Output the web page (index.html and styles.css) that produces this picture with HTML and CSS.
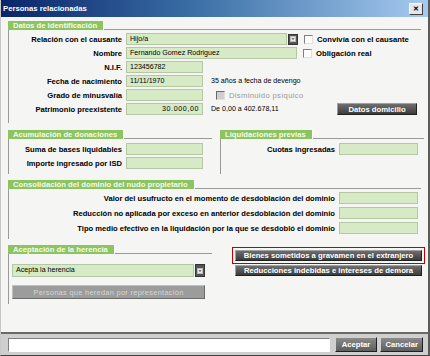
FILE: index.html
```html
<!DOCTYPE html>
<html lang="es">
<head>
    <meta charset="UTF-8">
    <title>Personas relacionadas</title>
    <link rel="stylesheet" href="styles.css">
</head>
<body>
<div class="window">
    <!-- Barra de título -->
    <div class="titlebar">
        <span class="title">Personas relacionadas</span>
        <span class="close">&#x2715;</span>
    </div>

    <div class="content">
        <!-- Datos de identificación -->
        <div class="group">
            <div class="group-head"><span class="group-tab">Datos de identificación</span></div>
            <div class="group-body ident">
                <div class="row">
                    <label class="lbl">Relación con el causante</label>
                    <span class="field w160">Hijo/a</span>
                    <span class="combo-btn"><svg width="6" height="6" viewBox="0 0 6 6"><rect x="0.5" y="0.5" width="5" height="5" fill="#e8e8e8" stroke="#bbb"/><path d="M1.5 2.2 L4.5 2.2 L3 4 Z" fill="#555"/></svg></span>
                    <span class="check"></span>
                    <span class="check-lbl">Convivía con el causante</span>
                </div>
                <div class="row">
                    <label class="lbl">Nombre</label>
                    <span class="field w171">Fernando Gomez Rodriguez</span>
                    <span class="check"></span>
                    <span class="check-lbl">Obligación real</span>
                </div>
                <div class="row">
                    <label class="lbl">N.I.F.</label>
                    <span class="field w77">123456782</span>
                </div>
                <div class="row">
                    <label class="lbl">Fecha de nacimiento</label>
                    <span class="field w77">11/11/1970</span>
                    <span class="note">35 años a fecha de devengo</span>
                </div>
                <div class="row gap-top">
                    <label class="lbl">Grado de minusvalía</label>
                    <span class="field w77"></span>
                    <span class="check disabled"></span>
                    <span class="check-lbl disabled">Disminuido psíquico</span>
                </div>
                <div class="row">
                    <label class="lbl">Patrimonio preexistente</label>
                    <span class="field w77 num">30.000,00</span>
                    <span class="note">De 0,00 a 402.678,11</span>
                    <span class="btn dark domicilio">Datos domicilio</span>
                </div>
            </div>
        </div>

        <div class="cols">
            <!-- Acumulación de donaciones -->
            <div class="group half">
                <div class="group-head"><span class="group-tab">Acumulación de donaciones</span></div>
                <div class="group-body small">
                    <div class="row">
                        <label class="lbl">Suma de bases liquidables</label>
                        <span class="field w77"></span>
                    </div>
                    <div class="row">
                        <label class="lbl">Importe ingresado por ISD</label>
                        <span class="field w77"></span>
                    </div>
                </div>
            </div>
            <!-- Liquidaciones previas -->
            <div class="group half">
                <div class="group-head"><span class="group-tab">Liquidaciones previas</span></div>
                <div class="group-body small">
                    <div class="row">
                        <label class="lbl lbl-wide">Cuotas ingresadas</label>
                        <span class="field w79"></span>
                    </div>
                </div>
            </div>
        </div>

        <!-- Consolidación del dominio -->
        <div class="group consol">
            <div class="group-head"><span class="group-tab">Consolidación del dominio del nudo propietario</span></div>
            <div class="group-body">
                <div class="row r15">
                    <label class="lbl lbl-long">Valor del usufructo en el momento de desdoblación del dominio</label>
                    <span class="field w79"></span>
                </div>
                <div class="row r15">
                    <label class="lbl lbl-long">Reducción no aplicada por exceso en anterior desdoblación del dominio</label>
                    <span class="field w79"></span>
                </div>
                <div class="row r15">
                    <label class="lbl lbl-long">Tipo medio efectivo en la liquidación por la que se desdobló el dominio</label>
                    <span class="field w79"></span>
                </div>
            </div>
        </div>

        <div class="cols bottom">
            <!-- Aceptación de la herencia -->
            <div class="group half">
                <div class="group-head"><span class="group-tab">Aceptación de la herencia</span></div>
                <div class="group-body herencia">
                    <div class="combo">
                        <span class="field combo-field">Acepta la herencia</span>
                        <span class="combo-btn"><svg width="6" height="6" viewBox="0 0 6 6"><rect x="0.5" y="0.5" width="5" height="5" fill="#e8e8e8" stroke="#bbb"/><path d="M1.5 2.2 L4.5 2.2 L3 4 Z" fill="#555"/></svg></span>
                    </div>
                    <span class="btn grey">Personas que heredan por representación</span>
                </div>
            </div>
            <div class="actions">
                <div class="marked"><span class="btn dark wide">Bienes sometidos a gravamen en el extranjero</span></div>
                <span class="btn dark wide">Reducciones indebidas e intereses de demora</span>
            </div>
        </div>
    </div>

    <!-- Pie -->
    <div class="footer">
        <span class="status"></span>
        <span class="btn mid">Aceptar</span>
        <span class="btn mid">Cancelar</span>
    </div>
</div>
</body>
</html>
```

FILE: styles.css
```css
* {
    margin: 0;
    padding: 0;
    box-sizing: border-box;
}

body {
    font-family: "Liberation Sans", Arial, sans-serif;
    background: #ffffff;
}

.window {
    width: 430px;
    height: 356px;
    display: flex;
    flex-direction: column;
    background: #f5f5f3;
    border-left: 1px solid #c8c8c8;
    border-right: 2px solid #5a5a5a;
    border-bottom: 1px solid #404040;
}

/* Barra de título */
.titlebar {
    height: 17px;
    display: flex;
    align-items: center;
    justify-content: space-between;
    padding: 0 5px 0 2px;
    background: linear-gradient(to right, #0a246a 0%, #3a6ea5 45%, #a6caf0 100%);
}

.title {
    color: #ffffff;
    font-weight: bold;
    font-size: 7.7px;
}

.close {
    width: 14px;
    height: 12px;
    display: flex;
    align-items: center;
    justify-content: center;
    background: #e6e6e6;
    border: 1px solid;
    border-color: #ffffff #404040 #404040 #ffffff;
    font-size: 7px;
    font-weight: bold;
    color: #000000;
}

.content {
    flex: 1;
    padding: 4px 7px 0 7px;
}

/* Grupos */
.group-head {
    display: flex;
    align-items: flex-end;
    height: 9px;
}

.group-head::after {
    content: "";
    flex: 1;
    border-bottom: 1px solid #9a9a9a;
}

.group-tab {
    height: 9px;
    line-height: 9px;
    padding: 0 6px 0 5px;
    background: #8dc462;
    color: #f4fbe8;
    font-weight: bold;
    font-size: 7.7px;
    border-right: 1px solid #ffffff;
}

.group-body {
    border-left: 1px solid #9a9a9a;
    padding: 3px 0 3px 0;
}

.ident {
    padding-bottom: 6px;
}

.row {
    display: flex;
    align-items: center;
    height: 12px;
    margin-bottom: 2px;
}

.row.gap-top {
    margin-top: 1px;
}

.row.r15 {
    margin-bottom: 3px;
}

.lbl {
    width: 113px;
    margin-right: 4px;
    text-align: right;
    font-weight: bold;
    font-size: 7.6px;
    color: #000000;
    white-space: nowrap;
}

.lbl-wide {
    width: 114px;
}

.lbl-long {
    width: 326px;
}

.field {
    height: 12px;
    line-height: 10px;
    padding: 0 3px;
    background: #d6eac6;
    border: 1px solid #b4c8a6;
    font-size: 7.1px;
    color: #000000;
    white-space: nowrap;
    overflow: hidden;
}

.field.num {
    text-align: right;
    letter-spacing: 0.6px;
}

.w160 { width: 161px; }
.w171 { width: 171px; }
.w77 { width: 77px; }
.w79 { width: 79px; }

.combo-btn {
    width: 10px;
    height: 11px;
    margin-left: 1px;
    display: flex;
    align-items: center;
    justify-content: center;
    background: #555555;
    border: 1px solid #333333;
}

.check {
    width: 9px;
    height: 9px;
    margin-left: 6px;
    background: #ffffff;
    border: 1px solid;
    border-color: #808080 #e0e0e0 #e0e0e0 #808080;
}

.check.disabled {
    margin-left: 13px;
    background: #cfcfcf;
    border-color: #6a6a6a #e0e0e0 #e0e0e0 #6a6a6a;
}

.check-lbl {
    margin-left: 4px;
    font-weight: bold;
    font-size: 7.7px;
    color: #000000;
}

.check-lbl.disabled {
    font-weight: normal;
    color: #9a9a9a;
    letter-spacing: 0.3px;
}

.note {
    margin-left: 8px;
    font-size: 7.1px;
    color: #000000;
}

/* Botones */
.btn {
    display: flex;
    align-items: center;
    justify-content: center;
    font-size: 7.7px;
    font-weight: bold;
    white-space: nowrap;
}

.btn.dark {
    color: #ffffff;
    background: linear-gradient(#6e6e6e, #3c3c3c);
    border: 1px solid;
    border-color: #a0a0a0 #202020 #202020 #a0a0a0;
}

.domicilio {
    width: 80px;
    height: 12px;
    margin-left: auto;
    margin-right: 4px;
}

.cols {
    display: flex;
    gap: 8px;
    margin-top: 7px;
}

.half {
    width: 204px;
    flex-shrink: 0;
}

.small {
    height: 35px;
    padding-top: 4px;
}

.consol {
    margin-top: 6px;
}

.consol .group-body {
    height: 50px;
    padding-top: 3px;
}

.bottom {
    margin-top: 6px;
    gap: 20px;
}

.herencia {
    height: 50px;
    padding: 10px 0 0 3px;
}

.combo {
    display: flex;
    margin-bottom: 8px;
}

.combo-field {
    width: 182px;
    height: 13px;
    line-height: 11px;
}

.combo .combo-btn {
    height: 13px;
}

.btn.grey {
    width: 193px;
    height: 14px;
    color: #d6d6d6;
    font-weight: normal;
    font-size: 7.4px;
    letter-spacing: 0.3px;
    background: #9c9c9c;
    border: 1px solid;
    border-color: #c0c0c0 #6a6a6a #6a6a6a #c0c0c0;
}

.actions {
    display: flex;
    flex-direction: column;
    flex-shrink: 0;
    padding-top: 2px;
}

.marked {
    padding: 2px;
    border: 1px solid #c00000;
    margin-bottom: 1px;
}

.btn.wide {
    width: 187px;
    height: 11px;
}

.actions > .btn.wide {
    margin-left: 3px;
}

/* Pie */
.footer {
    height: 23px;
    display: flex;
    align-items: center;
    gap: 3px;
    padding: 0 5px 0 7px;
    background: #cfcfcf;
    border-top: 2px solid #6a6a6a;
}

.status {
    width: 324px;
    height: 14px;
    margin-right: 2px;
    background: #ffffff;
    border: 1px solid;
    border-color: #808080 #ffffff #ffffff #808080;
}

.btn.mid {
    width: 43px;
    height: 15px;
    color: #ffffff;
    background: linear-gradient(#8a8a8a, #5e5e5e);
    border: 1px solid;
    border-color: #d0d0d0 #202020 #202020 #d0d0d0;
}
```
